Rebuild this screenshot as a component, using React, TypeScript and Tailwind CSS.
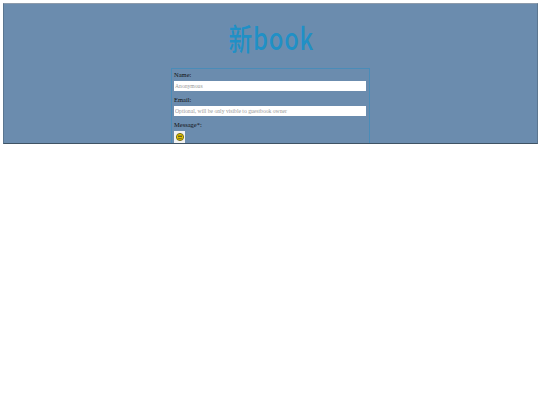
export default function App() {
  return (
    <div className="w-[540px] h-[405px] bg-white pt-[3px] pl-[3px] pr-[2px] overflow-hidden font-['Liberation_Serif',serif] text-[6.5px] text-[#111]">
      <div className="h-[141px] overflow-hidden bg-[#6b8cae] border-t border-t-[#8d9bab] border-b border-b-[#3f5364] border-l border-l-[#5b7690] border-r border-r-[#5b7690]">
        <h1 className="h-[64px] pt-[13px] pl-[2px] text-center text-[30px] leading-[40px] font-medium tracking-[1px] scale-x-[0.79] text-[#2090c6] font-['Noto_Sans_CJK_SC','Noto_Sans',sans-serif]">
          新book
        </h1>
        <form className="ml-[167px] w-[199px] border border-[#4a8cb8] px-[2px]">
          <label className="block h-[10px] leading-[11px]">Name:</label>
          <input
            readOnly
            placeholder="Anonymous"
            className="block w-[192px] h-[10px] mt-[2px] bg-white px-px text-[5.65px] placeholder:text-[#999999] outline-none"
          />
          <label className="block h-[10px] mt-[3px] leading-[11px]">Email:</label>
          <input
            readOnly
            placeholder="Optional, will be only visible to guestbook owner"
            className="block w-[192px] h-[10px] mt-[2px] bg-white px-px text-[5.65px] placeholder:text-[#999999] outline-none"
          />
          <label className="block h-[10px] mt-[3px] leading-[11px]">Message*:</label>
          <button type="button" className="flex items-center justify-center w-[11px] h-[12px] mt-[2px] bg-[#f2f2f2]">
            <svg viewBox="0 0 8 8" className="w-[8px] h-[8px]">
              <circle cx="4" cy="4" r="3.6" fill="#e6c800" stroke="#5a5200" strokeWidth="0.8" />
              <rect x="2" y="2.7" width="4" height="1" fill="#333" />
              <path d="M2.2 5.2 Q4 6.6 5.8 5.2" fill="none" stroke="#333" strokeWidth="0.7" />
            </svg>
          </button>
        </form>
      </div>
    </div>
  );
}
